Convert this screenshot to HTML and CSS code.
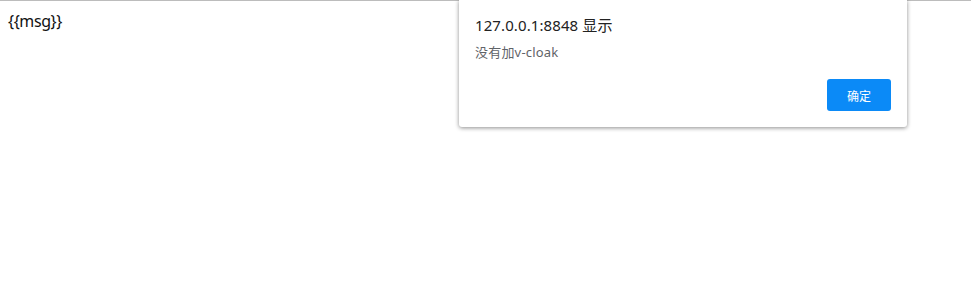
FILE: index.html
```html
<!DOCTYPE html>
<html>
<head>
<meta charset="utf-8">
<link rel="stylesheet" href="styles.css">
</head>
<body>
<div class="page">
  <div class="msg">{{msg}}</div>
</div>
<div class="dialog">
  <div class="title">127.0.0.1:8848 显示</div>
  <div class="text">没有加v-cloak</div>
  <div class="actions"><button class="ok">确定</button></div>
</div>
</body>
</html>
```
FILE: styles.css
```css
html, body {
  margin: 0;
  padding: 0;
  background: #fff;
  width: 971px;
  height: 291px;
  overflow: hidden;
  font-family: "Noto Sans", "Noto Sans CJK SC", sans-serif;
}
.page {
  border-top: 1px solid #bcbcbc;
  padding: 9px 8px 0;
}
.msg {
  font-size: 16px;
  line-height: 22px;
  letter-spacing: -0.4px;
  color: #111;
}
.dialog {
  position: absolute;
  left: 459px;
  top: 0;
  width: 448px;
  height: 127px;
  box-sizing: border-box;
  background: #fff;
  border-radius: 0 0 3px 3px;
  box-shadow: 0 1px 4px rgba(0,0,0,0.45);
  padding: 15px 16px 0 16px;
  display: flex;
  flex-direction: column;
}
.title {
  font-size: 15px;
  line-height: 20px;
  letter-spacing: 0.1px;
  color: #222;
}
.text {
  margin-top: 8px;
  font-size: 13px;
  line-height: 18px;
  letter-spacing: 0.2px;
  color: #5f6368;
}
.actions {
  margin-top: 18px;
  display: flex;
  justify-content: flex-end;
}
.ok {
  width: 64px;
  height: 32px;
  border: 0;
  border-radius: 3px;
  background: #0b8af7;
  color: #fff;
  font-family: "Noto Sans CJK SC", sans-serif;
  font-size: 12px;
  padding: 0;
}
```
